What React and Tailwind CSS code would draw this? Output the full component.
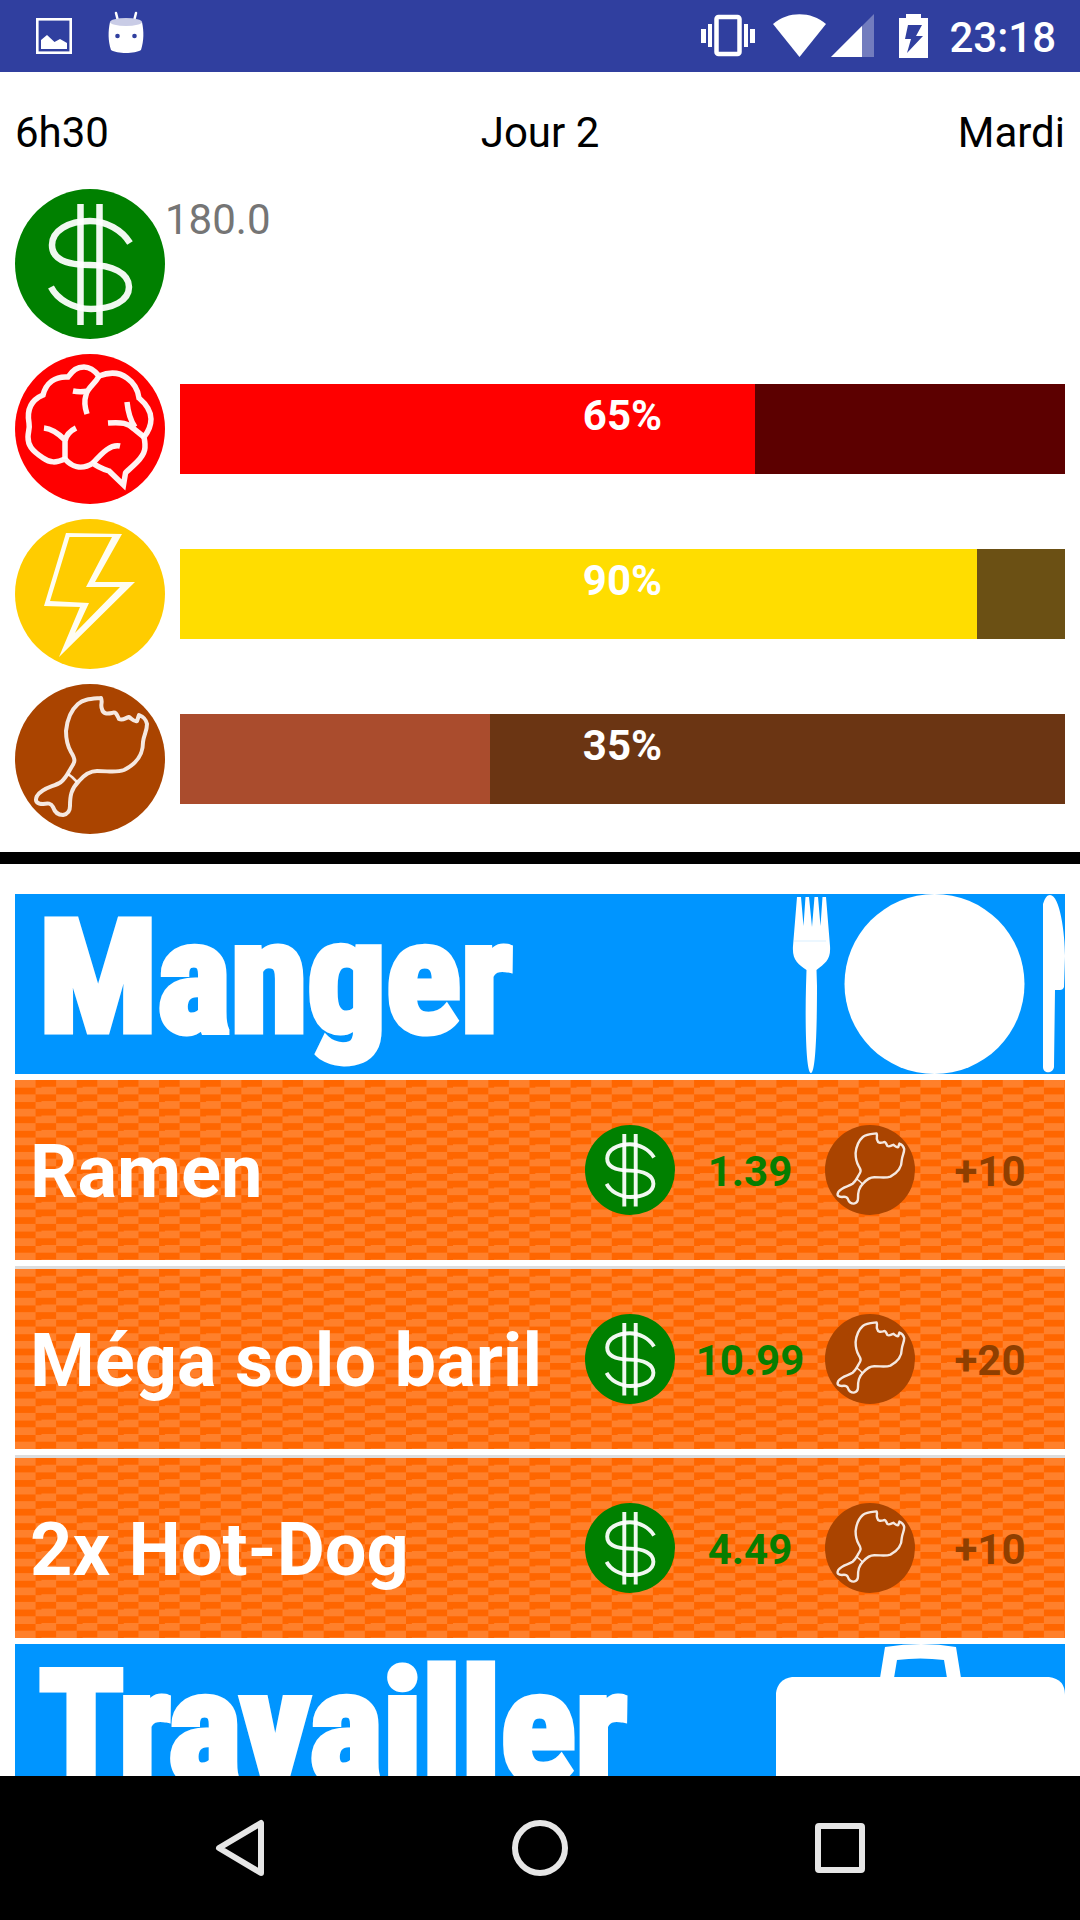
const stats = [
  { id: "mental", label: "Mental", value: 65, Icon: BrainIcon, fill: "bg-[#ff0000]", track: "bg-[#5c0000]" },
  { id: "energie", label: "Énergie", value: 90, Icon: BoltIcon, fill: "bg-[#ffdd00]", track: "bg-[#6b5014]" },
  { id: "faim", label: "Faim", value: 35, Icon: FoodIcon, fill: "bg-[#aa4c2d]", track: "bg-[#6b3513]" },
];

const meals = [
  { name: "Ramen", price: "1.39", gain: "+10" },
  { name: "Méga solo baril", price: "10.99", gain: "+20" },
  { name: "2x Hot-Dog", price: "4.49", gain: "+10" },
];

function Disc({ color, className, children }) {
  return (
    <svg viewBox="0 0 150 150" className={className} fill="none" aria-hidden="true">
      <circle cx="75" cy="75" r="75" fill={color} />
      {children}
    </svg>
  );
}

function MoneyIcon({ className }) {
  return (
    <Disc color="#008000" className={className}>
      <g stroke="#fff" strokeOpacity="0.94" strokeWidth="6.5">
        <path d="M65.5 15V136M84.5 15V136" />
        <path d="M115 54C107 41 91 32 75 32C53 32 37 42 37 56C37 70 52 76 75 76C97 76 114 84 114 98C114 112 97 120 76 120C58 120 42 110 36 98" />
      </g>
    </Disc>
  );
}

function BrainIcon({ className }) {
  return (
    <Disc color="#ff0000" className={className}>
      <g stroke="#fff" strokeOpacity="0.95" strokeWidth="5.5">
        <path d="M53 23C58 16 62 13 69 13C76 13 80 17 84 22C94 18 104 18 112 24C119 29 123 36 124 44C131 50 136 57 136 65C136 73 133 78 129 83C131 93 131 99 122 108C116 114 111 118 110.5 119L108.500 131L94 117C88 115 82 113 78 109C66 117 56 112 50 105C41 109 35 109 28 104C16 96 13 91 13 83C13 78 15 74 14 69C12 58 14 47 28 41C31 29 40 22 53 23Z" />
        <path d="M84 22C80 30 72 34 71 41C69 47 70 54 72 60M58 37C63 38 67 38 73 37" />
        <path d="M112 48C113 58 115 66 120 73M93 69C107 68 113 69 119 75L129 83" />
        <path d="M29 74C39 75 46 82 50 86V105M61 74C55 77 51 81 50 87M105 92C96 90 88 98 78 109" />
      </g>
    </Disc>
  );
}

function BoltIcon({ className }) {
  return (
    <Disc color="#ffcc00" className={className}>
      <path
        fill="#fff"
        fillOpacity="0.95"
        fillRule="evenodd"
        d="M51 14L107 15L80 63H120L44 138L65 88L29 87ZM54.500 18L35 82L74 84L60 114L105 68H71L97 18Z"
      />
    </Disc>
  );
}

function FoodIcon({ className }) {
  return (
    <Disc color="#aa4400" className={className}>
      <g stroke="#fff" strokeOpacity="0.88" strokeWidth="4" strokeLinejoin="round">
        <path d="M86 14C76 15 69 15 63 20C55 27 52 37 51 47C51 56 52 61 56 68C61 76 60 78 56 84C53 89 51 94 46 98C39 103 28 103 22 112C19 118 23 120 28 120C33 119 36 119 38 123C40 129 44 131 48 131C53 130 55 127 55 122C55 112 56 105 64 97C70 90 75 87 82 87C94 87 101 89 109 86C121 80 128 72 128 58C129 50 132 47 132 40C131 35 129 33 124 31L122 37C119 38 117 35 114 33C110 34 108 37 104 35C102 31 101 27 97 29C92 30 88 30 87 25C85 20 88 19 86 14Z" />
        <path d="M53 90L57 93L62 98" strokeWidth="2.500" />
      </g>
    </Disc>
  );
}

function PlateArt() {
  return (
    <svg viewBox="0 0 273 180" className="h-[180px] w-[273px] shrink-0" fill="#fff" aria-hidden="true">
      <path d="M5 3H9L11.500 32L13.500 3H17L20 33L22.500 3H26L28.500 32L30.500 3H34L38 52C39 66 33 69 24.500 76L25 92C25 130 24 179 19 179C14 179 13 130 14 92L14.500 76C6 70 0 66 1 52Z" />
      <path d="M2 47H34" stroke="#d9efff" />
      <circle cx="142.500" cy="90" r="90" />
      <path d="M251 10C253 4 255 1 258 1C268 1 273 40 273 62L272 93Q271 96 268 96H263L262 173C261 180 251 180 251 173Z" />
    </svg>
  );
}

function BriefcaseArt() {
  return (
    <svg viewBox="0 0 289 180" className="h-[180px] w-[289px] shrink-0" fill="#fff" aria-hidden="true">
      <path d="M16 33H273Q289 35 289 51V180H0V49Q2 35 16 33Z" />
      <path d="M104 34L109 3Q146 -3 180 3L185 34H171L168 16Q144 13 121 16L118 34Z" />
    </svg>
  );
}

function StatusBar() {
  return (
    <div className="flex h-[72px] shrink-0 items-center justify-between bg-[#303f9f] pr-6 pl-9 text-white">
      <div className="flex items-center gap-9">
        <svg viewBox="0 0 36 36" className="size-9" aria-label="Capture d’écran">
          <rect x="1.300" y="1.300" width="33.400" height="33.400" fill="none" stroke="currentColor" strokeWidth="2.600" />
          <path fill="currentColor" d="M5 22L11 17L18.500 24L24 21L31 25V31H5Z" />
        </svg>
        <svg viewBox="0 0 36 46" className="mb-2 h-[46px] w-9" aria-label="Android">
          <path d="M8 4L10 12M28 4L26 12" stroke="currentColor" strokeWidth="2.500" strokeLinecap="round" />
          <path fill="currentColor" d="M2 13C10 17 26 17 34 13C36 22 36 32 33 41C27 45 9 45 3 41C0 32 0 22 2 13Z" />
          <ellipse cx="18" cy="13" rx="16" ry="4" fill="#c9cce6" />
          <circle cx="9.500" cy="27" r="2.300" fill="#303f9f" />
          <circle cx="26.500" cy="27" r="2.300" fill="#303f9f" />
        </svg>
      </div>
      <div className="flex items-center">
        <svg viewBox="0 0 54 44" className="h-11 w-[54px]" fill="currentColor" aria-label="Vibreur">
          <path d="M0 15H5V29H0ZM7 10H11V33H7ZM43 10H47V33H43ZM49 15H54V29H49Z" />
          <rect x="15.500" y="3" width="23" height="37" rx="2" fill="none" stroke="currentColor" strokeWidth="4.500" />
        </svg>
        <svg viewBox="0 0 53 44" className="ml-[18px] h-11 w-[53px]" fill="currentColor" aria-label="Wi-Fi">
          <path d="M0 10C15 -3 38 -3 53 10L26.500 43Z" />
        </svg>
        <svg viewBox="0 0 43 44" className="ml-[5px] h-11 w-[43px]" fill="currentColor" aria-label="Signal">
          <path d="M0 43L43 0V43Z" opacity="0.32" />
          <path d="M0 43L31 12V43Z" />
        </svg>
        <svg viewBox="0 0 29 44" className="ml-[25px] h-11 w-[29px]" fill="currentColor" aria-label="Batterie en charge">
          <path fillRule="evenodd" d="M7 0H22V4H29V44H0V4H7ZM9 11L6 25H12L8 39L24 22H17L23 11Z" />
        </svg>
        <span className="ml-[21px] pt-0.5 text-[42px] leading-[49px] font-medium">23:18</span>
      </div>
    </div>
  );
}

function StatRow({ id, label, value, Icon, fill, track }) {
  return (
    <div className="flex items-center gap-[15px]">
      <Icon className="size-[150px] shrink-0" />
      <div
        id={id}
        role="progressbar"
        aria-label={label}
        aria-valuenow={value}
        aria-valuemin={0}
        aria-valuemax={100}
        className={`grid h-[90px] flex-1 ${track}`}
      >
        <div className={`col-start-1 row-start-1 ${fill}`} style={{ width: `${value}%` }} />
        <span className="col-start-1 row-start-1 pt-[7px] text-center text-[42px] leading-[49px] font-bold text-white">
          {value}%
        </span>
      </div>
    </div>
  );
}

function Banner({ title, children }) {
  return (
    <div className="flex h-[180px] justify-between overflow-hidden bg-[#0095ff] pl-6">
      <h2 className="font-['Roboto_Condensed','Roboto',sans-serif] text-[156px] leading-[168px] font-bold whitespace-nowrap text-white [-webkit-text-stroke:7px_white]">
        {title}
      </h2>
      {children}
    </div>
  );
}

function MealRow({ name, price, gain }) {
  return (
    <button
      type="button"
      className="grid h-[180px] w-full grid-cols-[1fr_90px_150px_90px_150px] items-center bg-[conic-gradient(#ff6600_25%,#ff802b_0_50%,#ff6600_0_75%,#ff802b_0)] bg-[length:3.92%_8%] pl-[15px] text-[42px] leading-[49px] font-bold"
    >
      <span className="pt-1 text-left text-[74px] leading-[84px] whitespace-nowrap text-white">{name}</span>
      <MoneyIcon className="size-[90px]" />
      <span className="pt-0.5 text-center text-[#087d00]">{price}</span>
      <FoodIcon className="size-[90px]" />
      <span className="pt-0.5 text-center text-[#8f3f00]">{gain}</span>
    </button>
  );
}

function NavBar() {
  return (
    <nav className="grid h-36 shrink-0 grid-cols-3 bg-black px-[90px] text-[#e6e6e6]">
      <button type="button" aria-label="Retour" className="flex items-center justify-center">
        <svg viewBox="0 0 60 60" className="size-[60px]" fill="none" stroke="currentColor" strokeWidth="6" strokeLinejoin="round">
          <path d="M51 5V55L9 30Z" />
        </svg>
      </button>
      <button type="button" aria-label="Accueil" className="flex items-center justify-center">
        <svg viewBox="0 0 60 60" className="size-[60px]" fill="none" stroke="currentColor" strokeWidth="6">
          <circle cx="30" cy="30" r="25" />
        </svg>
      </button>
      <button type="button" aria-label="Applications récentes" className="flex items-center justify-center">
        <svg viewBox="0 0 60 60" className="size-[60px]" fill="none" stroke="currentColor" strokeWidth="6">
          <rect x="8" y="8" width="44" height="44" rx="1" />
        </svg>
      </button>
    </nav>
  );
}

export default function App() {
  return (
    <div className="flex h-screen flex-col bg-white font-['Roboto',sans-serif]">
      <StatusBar />
      <header className="shrink-0 border-b-12 border-black px-[15px] pt-9 pb-[18px]">
        <div className="grid grid-cols-3 text-[42px] leading-[49px] text-black">
          <span>6h30</span>
          <span className="text-center">Jour 2</span>
          <span className="text-right">Mardi</span>
        </div>
        <div className="mt-8 flex flex-col gap-[15px]">
          <div className="flex">
            <MoneyIcon className="size-[150px] shrink-0" />
            <span className="pt-1.5 text-[42px] leading-[49px] text-[#757575]">180.0</span>
          </div>
          {stats.map((s) => (
            <StatRow key={s.id} {...s} />
          ))}
        </div>
      </header>
      <main className="min-h-0 flex-1 overflow-y-auto px-[15px] pt-[30px] [scrollbar-width:none]">
        <Banner title="Manger">
          <PlateArt />
        </Banner>
        <ul className="my-1.5 flex flex-col gap-1.5">
          {meals.map((m, i) => (
            <li key={m.name} className={i > 0 ? "border-t-3 border-[#dddddd]" : ""}>
              <MealRow {...m} />
            </li>
          ))}
        </ul>
        <Banner title="Travailler">
          <BriefcaseArt />
        </Banner>
      </main>
      <NavBar />
    </div>
  );
}
